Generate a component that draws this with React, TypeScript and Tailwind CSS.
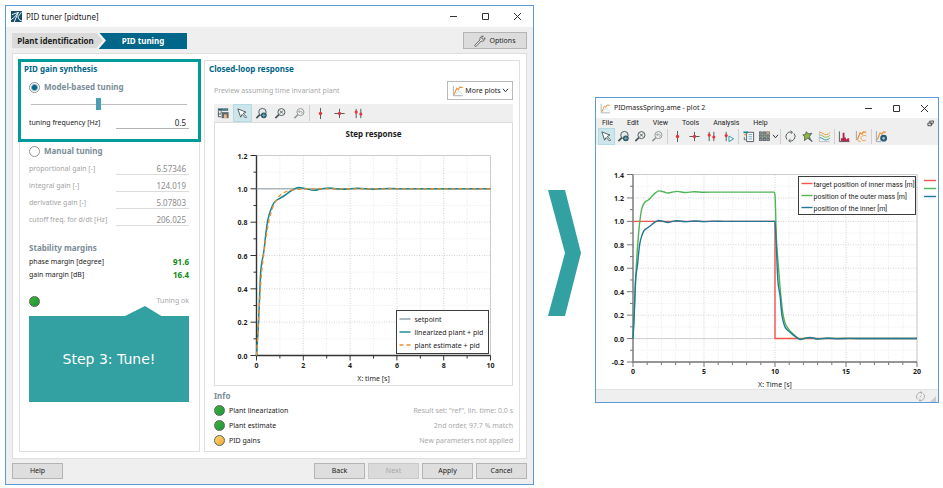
import { useState, type ReactNode } from "react";

type Point = [number, number];
type Series = { name: string; color: string; points: Point[]; dash?: string; width?: number; straight?: boolean };

const TEAL = "#33a0a1";
const INK = "#4a5559";

const TAIL: Point[] = [[4.3, 1.003], [5, 0.998], [5.7, 1.002], [6.4, 1], [8, 1], [10, 1]];
const PLANT: Point[] = [
  [0, 0], [0.08, 0.18], [0.19, 0.52], [0.32, 0.63], [0.39, 0.72], [0.48, 0.81], [0.6, 0.87], [0.78, 0.922],
  [1, 0.943], [1.2, 0.96], [1.5, 0.99], [1.8, 1.008], [2.1, 1.001], [2.45, 0.991], [2.8, 1], [3.1, 1.005], [3.7, 0.997], ...TAIL,
];
const ESTIMATE: Point[] = [
  [0, 0], [0.1, 0.24], [0.22, 0.5], [0.38, 0.68], [0.55, 0.82], [0.78, 0.915], [1.1, 0.972], [1.5, 0.992], [2, 0.999], [3, 1], [10, 1],
];
const OUTER: Point[] = [
  [0, 0], [0.15, 0.4], [0.3, 0.75], [0.5, 1.02], [0.65, 1.12], [0.85, 1.165], [1.1, 1.185], [1.3, 1.21], [1.6, 1.245],
  [1.85, 1.26], [2.15, 1.253], [2.45, 1.242], [3.1, 1.256], [3.7, 1.246], [4.3, 1.253], [5, 1.249], [6, 1.25], [9.95, 1.25],
];
const INNER_DROP: Point[] = [
  [10.05, 0.9], [10.22, 0.47], [10.35, 0.37], [10.5, 0.19], [10.75, 0.09], [11.1, 0.05], [11.4, 0.02], [11.8, -0.008],
  [12.1, 0.002], [12.45, 0.009], [13, -0.004], [13.7, 0.003], [14.4, -0.002], [15.2, 0.002], [16.5, 0], [20, 0],
];
const OUTER_DROP: Point[] = [
  [10, 1.22], [10.1, 0.85], [10.25, 0.6], [10.4, 0.38], [10.55, 0.22], [10.75, 0.12], [11.1, 0.06], [11.4, 0.025], [11.8, -0.006],
  [12.1, 0.003], [12.45, 0.008], [13, -0.003], [13.7, 0.003], [15, 0], [20, 0],
];

const STEP_SERIES: Series[] = [
  { name: "setpoint", color: "#8a99a3", points: [[0, 1], [10, 1]], straight: true },
  { name: "linearized plant + pid", color: "#168791", points: PLANT, width: 1.5 },
  { name: "plant estimate + pid", color: "#ef8f2f", points: ESTIMATE, dash: "4 3", width: 1.3 },
];

const PLOT_SERIES: Series[] = [
  { name: "target position of inner mass [m]", color: "#f4544e", points: [[0, 1], [10, 1], [10, 0], [20, 0]], straight: true, width: 1.4 },
  { name: "position of the outer mass [m]", color: "#4fb555", points: [...OUTER, ...OUTER_DROP], width: 1.4 },
  { name: "position of the inner [m]", color: "#23789a", points: [...PLANT, ...INNER_DROP], width: 1.4 },
];

type ChartProps = {
  label: string;
  title?: string;
  xLabel: string;
  size: [number, number];
  area: { left: number; right: number; top: number; bottom: number };
  x: { max: number; major: number; minor: number };
  y: { min: number; max: number };
  series: Series[];
  legend: { x: number; y: number; w: number; h: number; pitch: number; indent: number; font?: string };
  axis: string;
  children?: ReactNode;
};

function Chart({ label, title, xLabel, size, area, x, y, series, legend, axis, children }: ChartProps) {
  const px = (v: number) => area.left + (v / x.max) * (area.right - area.left);
  const py = (v: number) => area.bottom - ((v - y.min) / (y.max - y.min)) * (area.bottom - area.top);
  const xs = Array.from({ length: Math.round(x.max / x.minor) + 1 }, (_, i) => i * x.minor);
  const ys = Array.from({ length: Math.round((y.max - y.min) / 0.1) + 1 }, (_, i) => i);

  // monotone in x, so steep flanks never overshoot
  const path = (s: Series) =>
    s.points.map(([a, b], i) => {
      const X = px(a), Y = py(b);
      if (i === 0) return `M${X} ${Y}`;
      if (s.straight) return `L${X} ${Y}`;
      const p = s.points;
      const slope = (k: number) => {
        if (k <= 0 || k >= p.length - 1) return 0;
        const d0 = (p[k][1] - p[k - 1][1]) / (p[k][0] - p[k - 1][0]);
        const d1 = (p[k + 1][1] - p[k][1]) / (p[k + 1][0] - p[k][0]);
        return d0 * d1 <= 0 ? 0 : (2 * d0 * d1) / (d0 + d1);
      };
      const [a0, b0] = p[i - 1];
      const h = (a - a0) / 3;
      const m0 = i === 1 ? (b - b0) / (a - a0) : slope(i - 1);
      return `C${px(a0 + h)} ${py(b0 + m0 * h)} ${px(a - h)} ${py(b - slope(i) * h)} ${X} ${Y}`;
    }).join("");

  return (
    <svg viewBox={`0 0 ${size[0]} ${size[1]}`} className="w-full text-[7px]" role="img" aria-label={label} fill="#1c1c1c">
      {title && <text x={(area.left + area.right) / 2} y="14" textAnchor="middle" className="text-[8px] font-bold">{title}</text>}
      <g strokeDasharray="1 1.5" strokeWidth="1">
        {xs.map((v) => <path key={v} d={`M${px(v)} ${area.top}V${area.bottom}`} stroke={v % x.major === 0 ? "#d2d2d2" : "#e8e8e8"} />)}
        {ys.map((i) => <path key={i} d={`M${area.left} ${py(y.min + i / 10)}H${area.right}`} stroke={i % 2 === 0 ? "#d2d2d2" : "#ececec"} />)}
      </g>
      <path d={`M${area.left} ${area.top}H${area.right}V${area.bottom}`} fill="none" stroke="#cccccc" />
      {y.min < 0 && <path d={`M${area.left} ${py(0)}H${area.right}`} stroke="#cfcfcf" />}
      <g stroke={axis} fill="none">
        <path d={`M${area.left} ${area.top}V${area.bottom}H${area.right}`} strokeWidth="1.4" />
        {xs.map((v) => <path key={v} d={`M${px(v)} ${area.bottom}v${v % x.major === 0 ? 5 : 3}`} />)}
        {ys.map((i) => <path key={i} d={`M${area.left} ${py(y.min + i / 10)}h${i % 2 === 0 ? -6 : -3}`} />)}
      </g>
      <g className="font-bold">
        {xs.filter((v) => v % x.major === 0).map((v) => <text key={v} x={px(v)} y={area.bottom + 12} textAnchor="middle">{v}</text>)}
        {ys.filter((i) => i % 2 === 0).map((i) => (
          <text key={i} x={area.left - 9} y={py(y.min + i / 10) + 3} textAnchor="end">{(y.min + i / 10).toFixed(1).replace("-0.0", "0.0")}</text>
        ))}
      </g>
      <text x={(area.left + area.right) / 2} y={area.bottom + 25} textAnchor="middle">{xLabel}</text>
      {series.map((s) => (
        <path key={s.name} d={path(s)} fill="none" stroke={s.color} strokeWidth={s.width ?? 1} strokeDasharray={s.dash} strokeLinejoin="round" />
      ))}
      <rect x={legend.x} y={legend.y} width={legend.w} height={legend.h} fill="#fff" stroke="#3c3c3c" />
      {series.map((s, i) => {
        const cy = legend.y + legend.h / 2 + (i - 1) * legend.pitch;
        return (
          <g key={s.name} className={legend.font}>
            <path d={`M${legend.x + 3} ${cy}h11`} stroke={s.color} strokeWidth="1.4" strokeDasharray={s.dash} />
            <text x={legend.x + legend.indent} y={cy + 3}>{s.name}</text>
          </g>
        );
      })}
      {children}
    </svg>
  );
}

const ICONS: Record<string, ReactNode> = {
  table: (
    <>
      <path d="M1 1.5h11v2.5H1z" fill="#35606e" stroke="none" />
      <path d="M1.5 4.5v6h3M1.5 7.5h3M4.5 4.5v2" />
      <path d="M5 5.5h7.5V12H5z" fill="#606a6e" stroke="none" />
      <path d="M7.5 8h3v4h-3z" fill="#e8b98a" stroke="none" />
      <path d="M7 2.7h1M9.500 2.7h1" stroke="#5fc3cf" />
    </>
  ),
  arrow: <path d="M2 2l3 9 1.600-3 3.700 3.900 1.200-1.200L7.700 7l3-1.500z" fill="#fff" />,
  zoomFit: (
    <>
      <circle cx="8" cy="5.500" r="4" fill="#e6eaec" />
      <path d="M5.200 8.300L1.500 12" strokeWidth="2" />
      <circle cx="9.500" cy="9" r="3.100" fill="#2f5665" stroke="none" />
      <path d="M9.500 7v4M7.500 9h4" stroke="#7fc6d4" strokeWidth=".8" />
    </>
  ),
  zoomX: (
    <>
      <circle cx="8" cy="5.500" r="3.800" />
      <path d="M5.200 8.300L1.500 12" strokeWidth="1.800" />
      <path d="M6.400 3.900l3.200 3.200M9.600 3.900L6.400 7.100" />
    </>
  ),
  zoomBack: (
    <g stroke="#8b9396">
      <circle cx="8" cy="5.500" r="3.800" />
      <path d="M5.200 8.300L1.500 12" strokeWidth="1.600" />
      <path d="M6 5h3q1 0 1 1t-1 1M7.200 3.700L6 5l1.200 1.300" strokeWidth=".8" />
    </g>
  ),
  cursorOne: <><path d="M7 1v12" /><circle cx="7" cy="7" r="1.800" fill="#e0363c" stroke="none" /></>,
  cursorCross: <><path d="M7 2v10M1.500 7h11" /><circle cx="7" cy="7" r="1.800" fill="#e0363c" stroke="none" /></>,
  cursorTwo: (
    <>
      <path d="M4.500 2v10M9.500 2v10" />
      <circle cx="4.500" cy="5.500" r="1.700" fill="#e0363c" stroke="none" />
      <circle cx="9.500" cy="7.500" r="1.700" fill="#e0363c" stroke="none" />
    </>
  ),
  cursorPlay: (
    <>
      <path d="M4.500 2v10" />
      <circle cx="4.500" cy="6" r="1.700" fill="#e0363c" stroke="none" />
      <path d="M7.500 6.500v6l5-3z" fill="#fff" stroke="#2a93ac" />
    </>
  ),
  notes: (
    <>
      <path d="M5 2.500h7.500v10H5z" fill="#fff" />
      <path d="M7 5h4M7 7.300h4M7 9.600h4" stroke="#3f8ba0" strokeWidth=".8" />
      <path d="M1.500 2.500h5" stroke="#168791" strokeWidth="1.800" />
      <path d="M2.500 5h2" stroke="#ef8f2f" strokeWidth="1.500" />
      <path d="M2.500 7.500v3h2" strokeWidth=".8" />
    </>
  ),
  grid: (
    <>
      {[1.5, 5.5, 9.5].map((gx) => [2, 5.5, 9].map((gy) => <rect key={`${gx}-${gy}`} x={gx} y={gy} width="3" height="2.500" fill="#8d9698" strokeWidth=".7" />))}
      <rect x="6" y="6" width="2" height="1.500" fill="#7fb65b" stroke="none" />
      <rect x="9.500" y="2" width="2.500" height="2" fill="#e8ac6a" stroke="none" />
    </>
  ),
  refresh: (
    <>
      <path d="M3.200 10.300A5 5 0 0 1 8.500 2.300M10.800 3.700A5 5 0 0 1 5.500 11.700" />
      <path d="M7 .8l2.200 1.600L7.300 4.300M7 9.700L5 11.500l2.200 1.800" strokeWidth=".9" />
    </>
  ),
  pin: (
    <>
      <path d="M7.500 8l4.700 4.500" strokeWidth="1.400" />
      <path d="M2 5.200l2.600-.2L5.800 1.800l1.800 2.400 4-.6-2.400 3.300.6 2.900-2.900-.8-3.200 2.400.4-3.900z" fill="#8db83c" strokeWidth=".9" />
    </>
  ),
  curves: (
    <>
      <path d="M1.500 1.500v11h11" stroke="#b8bfc2" />
      <path d="M2 2.500c3 0 4 3 7 2.500s3-2 4-2" stroke="#ef8f2f" />
      <path d="M2 5.300c3 0 4 3 7 2.500s3-2 4-2" stroke="#8db83c" />
      <path d="M2 8.200c3 0 4 3 7 2.500s3-2 4-2" stroke="#2a93ac" />
    </>
  ),
  bars: (
    <>
      <path d="M1.500 1.500v11h11" />
      <path d="M3 12V9h2V3h2v5h1.500v2H10v-1h2v3z" fill="#b5244a" stroke="none" />
    </>
  ),
  plot: (
    <>
      <path d="M1.500 1v11.500h11" stroke="#9aa4a8" />
      <path d="M2.500 11L5.500 4l2 1.500 1.500-3 3.500.5" stroke="#ef8f2f" strokeWidth="1.200" />
      <path d="M4 11c2-2 2.500-4 4-4s3 2 4 4" stroke="#b9cdd4" strokeWidth=".8" />
    </>
  ),
  plotSwap: (
    <>
      <path d="M1.500 1v10" stroke="#9aa4a8" />
      <path d="M2.500 10.500L5.500 3l2 1.500 1.500-2.500 3 .5" stroke="#ef8f2f" strokeWidth="1.300" />
      <path d="M12.500 6.500c-3-1.500-6 0-6 2.500s4 3.500 5.500 1.500M6 12.500l-3-1" stroke="#ef8f2f" strokeWidth=".9" />
    </>
  ),
  plotGlobe: (
    <>
      <path d="M1.500 1v11.500h5" stroke="#9aa4a8" />
      <path d="M2.500 10.500L5.500 3l2 1.500 1.500-2.500 3 .5" stroke="#ef8f2f" strokeWidth="1.200" />
      <circle cx="9.300" cy="8.800" r="3.700" fill="#2b5c75" stroke="none" />
      <circle cx="9.300" cy="8.800" r="1.300" fill="#9ed3e0" stroke="none" />
    </>
  ),
};

function Icon({ name, className = "size-[13px]" }: { name: string; className?: string }) {
  return <svg viewBox="0 0 14 14" className={`shrink-0 ${className}`} fill="none" stroke={INK} aria-hidden="true">{ICONS[name]}</svg>;
}

function ToolButton({ name, label, active, className = "w-[19px]" }: { name: string; label: string; active?: boolean; className?: string }) {
  return (
    <button type="button" aria-label={label} aria-pressed={active}
      className={`flex h-full items-center justify-center border ${className} ${active ? "border-[#b5dbe2] bg-[#cde6eb]" : "border-transparent"}`}>
      <Icon name={name} />
    </button>
  );
}

function Chevron() {
  return <svg viewBox="0 0 8 6" className="h-[5px] w-[7px] shrink-0" fill="none" stroke="#333" strokeWidth="1.2"><path d="M1 1l3 3.500L7 1" /></svg>;
}

function WindowButtons({ className }: { className: string }) {
  return (
    <div className={`ml-auto flex items-center ${className}`}>
      <button type="button" aria-label="Minimize"><svg viewBox="0 0 9 9" className="size-[9px]" stroke="#333"><path d="M1 4.500h7" /></svg></button>
      <button type="button" aria-label="Maximize"><svg viewBox="0 0 9 9" className="size-[9px]" fill="none" stroke="#333"><path d="M1.500 1.500h6v6h-6z" /></svg></button>
      <button type="button" aria-label="Close"><svg viewBox="0 0 9 9" className="size-[9px]" stroke="#333"><path d="M1 1l7 7M8 1L1 8" /></svg></button>
    </div>
  );
}

function Field({ id, label, value, disabled }: { id: string; label: string; value: string; disabled?: boolean }) {
  return (
    <div className={`flex h-[17px] items-center justify-between ${disabled ? "text-[#a3a3a3]" : "text-[#222]"}`}>
      <label htmlFor={id}>{label}</label>
      <input id={id} type="text" defaultValue={value} disabled={disabled}
        className={`h-[13px] w-[73px] border-b pr-[3px] text-right text-[8px] ${disabled ? "border-[#dcdcdc] text-[#8c8c8c]" : "border-[#b4b4b4]"}`} />
    </div>
  );
}

function Mode({ label, checked, onPick, className }: { label: string; checked: boolean; onPick: () => void; className: string }) {
  return (
    <label className={`flex items-center gap-1 text-[8px] font-bold text-[#7b8d97] ${className}`}>
      <input type="radio" name="mode" checked={checked} onChange={onPick}
        className="size-[11px] appearance-none rounded-full border border-[#949494] bg-white checked:bg-[radial-gradient(circle,#00668a_2px,#fff_4px)]" />
      {label}
    </label>
  );
}

function Led({ amber }: { amber?: boolean }) {
  return <span className={`size-[11px] shrink-0 rounded-full border border-[#56665a] ${amber ? "bg-linear-to-br from-[#ffd96b] to-[#f2a335]" : "bg-linear-to-br from-[#3fb32c] to-[#1a9440]"}`} />;
}

function PushButton({ children, disabled, className = "" }: { children: ReactNode; disabled?: boolean; className?: string }) {
  return (
    <button type="button" disabled={disabled}
      className={`h-4 w-[51px] border border-[#b4b4b4] bg-[#dedede] text-center disabled:border-[#cacaca] disabled:bg-[#dadada] disabled:text-[#a8a8a8] ${className}`}>
      {children}
    </button>
  );
}

const INFO = [
  { name: "Plant linearization", note: 'Result set: "ref", lin. time: 0.0 s' },
  { name: "Plant estimate", note: "2nd order, 97.7 % match" },
  { name: "PID gains", note: "New parameters not applied", amber: true },
];

function TuningPanel() {
  const [mode, setMode] = useState("model");
  return (
    <section className="w-[181px] shrink-0 border border-[#dfdfdf]">
      <div className="-mx-[2px] -mt-[2px] border-3 border-[#009a9a] pr-[9px] pb-2 pl-2">
        <h2 className="-ml-[5px] h-[14px] text-[8px] leading-[14px] font-bold text-[#00668a]">PID gain synthesis</h2>
        <Mode label="Model-based tuning" className="h-[22px]" checked={mode === "model"} onPick={() => setMode("model")} />
        <input type="range" aria-label="tuning frequency" defaultValue="43" max="100"
          className="mx-[2px] block h-3 w-[156px] appearance-none bg-[linear-gradient(#bdbdbd,#bdbdbd)] bg-size-[100%_1px] bg-center bg-no-repeat [&::-webkit-slider-thumb]:h-3 [&::-webkit-slider-thumb]:w-[5px] [&::-webkit-slider-thumb]:appearance-none [&::-webkit-slider-thumb]:bg-[#4b9fb5]" />
        <div className="mt-1"><Field id="freq" label="tuning frequency [Hz]" value="0.5" /></div>
      </div>
      <div className="pr-[10px] pl-[9px]">
        <Mode label="Manual tuning" className="h-[18px]" checked={mode === "manual"} onPick={() => setMode("manual")} />
        <Field id="kp" label="proportional gain [-]" value="6.57346" disabled />
        <Field id="ki" label="integral gain [-]" value="124.019" disabled />
        <Field id="kd" label="derivative gain [-]" value="5.07803" disabled />
        <Field id="fc" label="cutoff freq. for d/dt [Hz]" value="206.025" disabled />
        <h3 className="mt-[13px] h-[14px] text-[8px] leading-[14px] font-bold text-[#7b8d97]">Stability margins</h3>
        <dl className="leading-[13px]">
          <div className="flex justify-between"><dt>phase margin [degree]</dt><dd className="text-[8px] font-bold text-[#0c8a12]">91.6</dd></div>
          <div className="flex justify-between"><dt>gain margin [dB]</dt><dd className="text-[8px] font-bold text-[#0c8a12]">16.4</dd></div>
        </dl>
        <div className="mt-[14px] flex h-3 items-center justify-between text-[#a8a8a8]"><Led /><span>Tuning ok</span></div>
        <div className="relative mt-[9px] flex h-[86px] items-center justify-center bg-[#33a0a1] font-['DejaVu_Sans',sans-serif] text-[14px] text-white">
          <svg viewBox="0 0 40 11" className="absolute -top-[10px] right-[26px] h-[11px] w-10" fill={TEAL} aria-hidden="true"><path d="M0 11L22 0l18 11z" /></svg>
          Step 3: Tune!
        </div>
      </div>
    </section>
  );
}

function ResponsePanel() {
  return (
    <section className="min-w-0 flex-1 border border-[#dfdfdf] pb-[3px]">
      <h2 className="mt-px h-[14px] pl-1 text-[8px] leading-[14px] font-bold text-[#00668a]">Closed-loop response</h2>
      <div className="pr-[6px] pl-[9px]">
        <div className="mt-[5px] flex h-[19px] items-center justify-between">
          <span className="text-[#a8a8a8]">Preview assuming time invariant plant</span>
          <button type="button" className="flex h-[19px] w-[66px] items-center justify-between border border-[#b9b9b9] bg-white pr-[3px] pl-1">
            <Icon name="plot" className="size-3" />More plots<Chevron />
          </button>
        </div>
        <div className="mt-1 flex h-[18px] items-center bg-[#efefef]">
          <ToolButton name="table" label="Open table" />
          <ToolButton name="arrow" label="Select" active />
          <ToolButton name="zoomFit" label="Zoom area" />
          <ToolButton name="zoomX" label="Reset zoom" />
          <ToolButton name="zoomBack" label="Previous zoom" className="w-[18px]" />
          <span className="mx-px h-4 w-px bg-[#cfcfcf]" />
          <ToolButton name="cursorOne" label="Cursor" />
          <ToolButton name="cursorCross" label="Cross cursor" />
          <ToolButton name="cursorTwo" label="Double cursor" />
        </div>
        <div className="border border-[#dcdcdc]">
          <Chart label="Step response chart" title="Step response" xLabel="X: time [s]" size={[297, 262]} axis="#333333"
            area={{ left: 41.5, right: 275.5, top: 32.5, bottom: 232.5 }} x={{ max: 10, major: 2, minor: 1 }} y={{ min: 0, max: 1.2 }}
            series={STEP_SERIES} legend={{ x: 181.5, y: 187.5, w: 92, h: 43, pitch: 13, indent: 18 }} />
        </div>
        <h3 className="mt-[3px] h-[14px] text-[8px] leading-[14px] font-bold text-[#7b8d97]">Info</h3>
        <ul>
          {INFO.map((row) => (
            <li key={row.name} className="flex h-[15px] items-center gap-1">
              <Led amber={row.amber} />
              <span>{row.name}</span>
              <span className="ml-auto text-[#a8a8a8]">{row.note}</span>
            </li>
          ))}
        </ul>
      </div>
    </section>
  );
}

function TunerWindow() {
  return (
    <div className="border border-[#5a9bd6] bg-[#efefef]">
      <header className="flex h-[21px] items-center bg-white pr-[11px] pl-[5px]">
        <svg viewBox="0 0 12 12" className="size-[11px]" fill="none" stroke="#fff" aria-hidden="true">
          <path d="M0 0h12v12H0z" fill="#14506b" stroke="none" />
          <path d="M1 4l7-2.500L3.500 12M8 1.500L4 6.500 0 9.500M7.500 6.500l1.500 3 3 1.500M11.500 1L7.500 6.500" />
        </svg>
        <h1 className="pl-1 text-[8px]">PID tuner [pidtune]</h1>
        <WindowButtons className="gap-[23px]" />
      </header>
      <div className="px-[6px] pt-[5px] pb-[5px]">
        <div className="flex items-center justify-between">
          <nav className="flex h-4 text-[8px] font-bold">
            <button type="button" className="z-1 bg-[#f4f4f4] pr-[3px] [clip-path:polygon(0_0,calc(100%-7px)_0,100%_50%,calc(100%-7px)_100%,0_100%)]">
              <span className="flex h-4 w-[91px] items-center justify-center bg-[#dadada] pr-1 [clip-path:polygon(0_0,calc(100%-7px)_0,100%_50%,calc(100%-7px)_100%,0_100%)]">Plant identification</span>
            </button>
            <button type="button" className="-ml-[7px] w-[88px] bg-[#00668a] text-white" aria-current="page">PID tuning</button>
          </nav>
          <button type="button" className="flex h-[17px] w-16 items-center justify-center gap-[3px] border border-[#b4b4b4] bg-[#dcdcdc]">
            <svg viewBox="0 0 12 12" className="size-3" fill="#f2f2f2" stroke="#555" strokeWidth=".9" aria-hidden="true">
              <path d="M1 9.800L6 5C5.400 2.800 7 .8 9.300 1.100L7.800 2.700l.3 1.300 1.300.3L11 2.800c.3 2.300-1.700 3.900-3.900 3.300L2.300 11.200C1.300 12 .2 10.800 1 9.800z" />
            </svg>
            Options
          </button>
        </div>
        <div className="mt-1 flex gap-1 border border-[#dedede] bg-white p-[6px]">
          <TuningPanel />
          <ResponsePanel />
        </div>
        <footer className="mt-1 flex gap-[3px]">
          <PushButton>Help</PushButton>
          <PushButton className="ml-auto">Back</PushButton>
          <PushButton disabled>Next</PushButton>
          <PushButton>Apply</PushButton>
          <PushButton>Cancel</PushButton>
        </footer>
      </div>
    </div>
  );
}

function Separator() {
  return <span className="mx-px h-[15px] w-px bg-[#cfcfcf]" />;
}

function PlotWindow() {
  return (
    <div className="mt-[92px] border border-[#5a9bd6] bg-[#efefef]">
      <header className="flex h-5 items-center bg-white pr-[9px] pl-1">
        <Icon name="plot" className="size-[11px]" />
        <h1 className="pl-[3px]">PIDmassSpring.ame - plot 2</h1>
        <WindowButtons className="gap-[19px]" />
      </header>
      <nav className="flex h-[10px] items-center gap-[14px] pr-1 pl-[6px] font-['Roboto',sans-serif]">
        {["File", "Edit", "View", "Tools", "Analysis", "Help"].map((m) => <button key={m} type="button">{m}</button>)}
        <svg viewBox="0 0 8 8" className="ml-auto size-[7px]" fill="#ddd" stroke="#444" aria-hidden="true"><path d="M2.500 1.500l5-.5-.5 3-2 1zM1 3.500h4.500L5 6.500H1z" /></svg>
      </nav>
      <div className="flex h-[17px] items-center pl-[2px]">
        <ToolButton name="arrow" label="Select" active className="w-[17px]" />
        <ToolButton name="zoomFit" label="Zoom area" className="w-[17px]" />
        <ToolButton name="zoomX" label="Reset zoom" className="w-[17px]" />
        <ToolButton name="zoomBack" label="Previous zoom" className="w-[17px]" />
        <Separator />
        <ToolButton name="cursorOne" label="Cursor" className="w-[17px]" />
        <ToolButton name="cursorCross" label="Cross cursor" className="w-[17px]" />
        <ToolButton name="cursorTwo" label="Double cursor" className="w-[17px]" />
        <ToolButton name="cursorPlay" label="Play cursor" className="w-[17px]" />
        <Separator />
        <ToolButton name="notes" label="Text output" className="w-[17px]" />
        <ToolButton name="grid" label="Layout" className="w-[15px]" />
        <Chevron />
        <Separator />
        <ToolButton name="refresh" label="Update" className="w-[17px]" />
        <ToolButton name="pin" label="Pin" className="w-[17px]" />
        <ToolButton name="curves" label="Curves" className="w-[17px]" />
        <Separator />
        <ToolButton name="bars" label="Spectrum" className="w-[17px]" />
        <ToolButton name="plotSwap" label="Swap" className="w-[17px]" />
        <Separator />
        <ToolButton name="plotGlobe" label="Export" className="w-[17px]" />
      </div>
      <div className="bg-white">
        <Chart label="Mass positions chart" xLabel="X: Time [s]" size={[342, 244]} axis="#777777"
          area={{ left: 37, right: 321, top: 29.5, bottom: 217 }} x={{ max: 20, major: 5, minor: 1 }} y={{ min: -0.2, max: 1.4 }}
          series={PLOT_SERIES} legend={{ x: 202.5, y: 31.5, w: 117, h: 38, pitch: 12, indent: 15, font: "font-['Roboto',sans-serif]" }}>
          {PLOT_SERIES.map((s, i) => <path key={s.name} d={`M328 ${35.5 + i * 8}h12`} stroke={s.color} strokeWidth="1.400" />)}
        </Chart>
      </div>
      <footer className="flex h-[13px] items-center justify-end border-t border-[#e2e2e2] pr-[2px]">
        <svg viewBox="0 0 12 12" className="size-[11px]" fill="none" stroke="#aaa" aria-hidden="true">
          <path d="M2.800 9.200A4.600 4.600 0 0 1 7.500 1.700M9.200 2.800A4.600 4.600 0 0 1 4.500 10.300M6 .5l1.800 1.300L6.300 3.300M6 8.700l-1.700 1.500L6 11.500M5 7l2-2" />
        </svg>
        <svg viewBox="0 0 6 6" className="ml-1 size-[6px] self-end" fill="#ccc" aria-hidden="true"><path d="M6 0v6H0z" /></svg>
      </footer>
    </div>
  );
}

export default function App() {
  return (
    <main className="grid grid-cols-[529fr_61fr_344fr] items-start bg-white pt-[5px] pr-1 pb-[3px] pl-[5px] font-['Noto_Sans','Open_Sans',sans-serif] text-[7px] leading-[10px] text-[#1c1c1c]">
      <TunerWindow />
      <svg viewBox="0 0 33 126" className="mt-4 w-[33px] self-center justify-self-center" fill={TEAL} aria-hidden="true"><path d="M0 0h17l16 63-16 63H0l17-63z" /></svg>
      <PlotWindow />
    </main>
  );
}
